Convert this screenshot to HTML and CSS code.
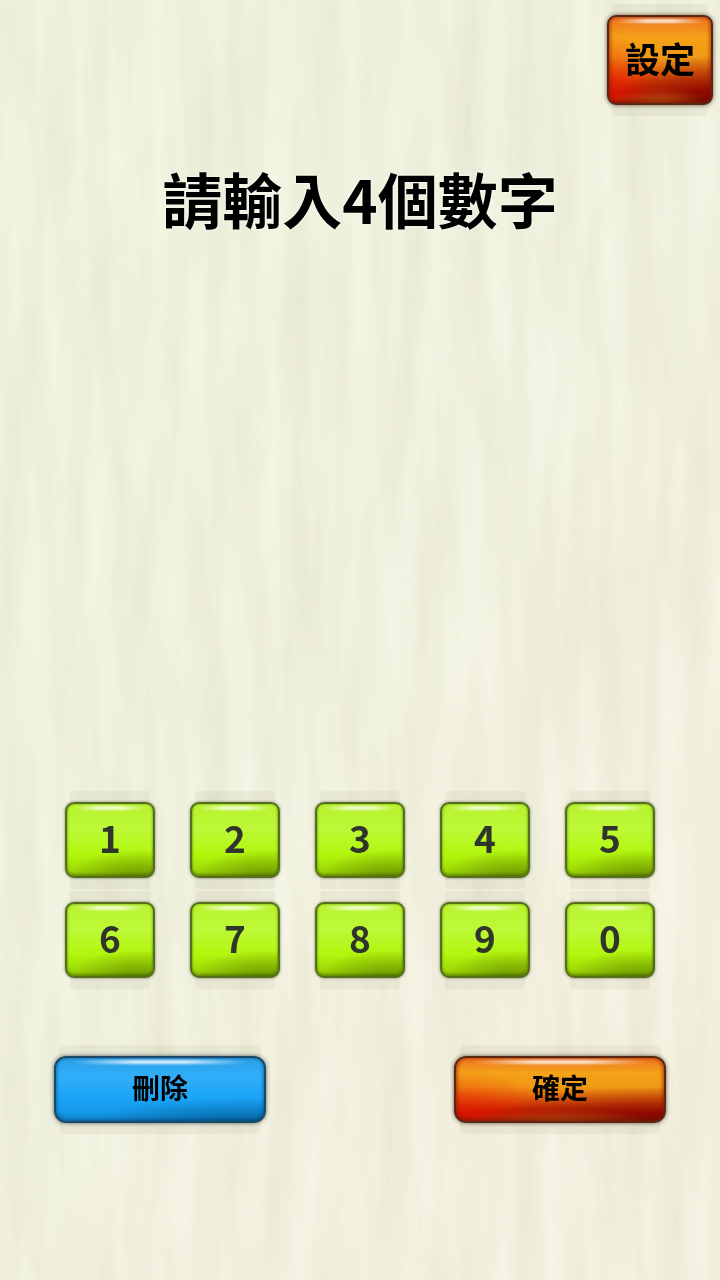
FILE: index.html
```html
<!DOCTYPE html>
<html lang="zh-Hant">
<head>
    <meta charset="UTF-8">
    <meta name="viewport" content="width=device-width, initial-scale=1.0">
    <title>請輸入4個數字</title>
    <link rel="stylesheet" href="styles.css">
</head>
<body>
    <!-- wood grain -->
    <svg class="grain" aria-hidden="true">
        <filter id="wood" x="0" y="0" width="100%" height="100%" color-interpolation-filters="sRGB">
            <feTurbulence type="fractalNoise" baseFrequency="0.035 0.004" numOctaves="4" seed="7"/>
            <feColorMatrix values="0 0 0 0 0.84  0 0 0 0 0.84  0 0 0 0 0.74  0.6 0 0 0 -0.14"/>
        </filter>
        <rect width="100%" height="100%" filter="url(#wood)"/>
    </svg>

    <div class="game">
        <header class="top">
            <button type="button" class="btn orange settings">設定</button>
        </header>

        <h1 class="title">請輸入4個數字</h1>

        <div class="keypad">
            <button type="button" class="btn green">1</button>
            <button type="button" class="btn green">2</button>
            <button type="button" class="btn green">3</button>
            <button type="button" class="btn green">4</button>
            <button type="button" class="btn green">5</button>
            <button type="button" class="btn green">6</button>
            <button type="button" class="btn green">7</button>
            <button type="button" class="btn green">8</button>
            <button type="button" class="btn green">9</button>
            <button type="button" class="btn green">0</button>
        </div>

        <div class="actions">
            <button type="button" class="btn blue">刪除</button>
            <button type="button" class="btn orange">確定</button>
        </div>
    </div>
</body>
</html>
```

FILE: styles.css
```css
* {
    box-sizing: border-box;
}
body {
    margin: 0;
    background: linear-gradient(125deg, #f4f7e2 0%, #f4f5e4 50%, #f8f4e5 80%);
    font-family: "Noto Sans CJK TC", "Noto Sans", sans-serif;
    color: #000;
}
.grain {
    position: fixed;
    inset: 0;
    width: 100%;
    height: 100%;
    z-index: -1;
}
.game {
    display: flex;
    flex-direction: column;
    min-height: 100vh;
    padding-bottom: 157px;
}
.top {
    display: flex;
    justify-content: flex-end;
    padding: 15px 7px 0;
}
.title {
    margin: 48px 0;
    font-size: 60px;
    line-height: 90px;
    font-weight: bold;
    text-align: center;
    text-shadow: 0 0 3px #fff;
}
.keypad {
    display: grid;
    grid-template-columns: repeat(5, 1fr);
    gap: 24px 35px;
    margin-top: auto;
    padding: 0 65px;
}
.actions {
    display: flex;
    justify-content: space-between;
    margin-top: 78px;
    padding: 0 54px;
}

/* glossy buttons */
.btn {
    position: relative;
    padding: 0 0 6px;
    border: 2px solid;
    border-radius: 9px;
    font-family: inherit;
    font-weight: bold;
    color: #000;
    cursor: pointer;
}
.btn::before {
    content: "";
    position: absolute;
    top: 2px;
    left: 8%;
    right: 8%;
    height: 4px;
    background: linear-gradient(90deg, transparent, rgba(255, 255, 255, 0.8) 35%, rgba(255, 255, 255, 0.8) 65%, transparent);
    filter: blur(1px);
}
.green {
    height: 76px;
    border-color: #55701a;
    background:
        radial-gradient(ellipse 85% 42% at 85% 105%, rgba(95, 130, 0, 0.8), rgba(110, 150, 0, 0.5) 50%, transparent),
        linear-gradient(#b7f22b, #bdf938 35%, #b2f60d 70%, #98d005);
    box-shadow:
        0 0 3px rgba(50, 60, 20, 0.6),
        0 16px 1px -5px rgba(110, 110, 80, 0.07),
        0 -16px 1px -5px rgba(110, 110, 80, 0.07),
        inset 0 0 2px rgba(60, 90, 0, 0.6),
        inset 0 -2px 3px rgba(50, 70, 0, 0.4);
    font-size: 37px;
    line-height: 56px;
    color: #2f352b;
}
.orange {
    border-color: #5a2812;
    background:
        radial-gradient(ellipse 45% 20% at 50% 100%, rgba(205, 110, 20, 0.6), transparent),
        radial-gradient(ellipse 90% 60% at 100% 105%, rgba(110, 0, 0, 0.8), rgba(125, 0, 0, 0.35) 60%, transparent),
        radial-gradient(ellipse 50% 70% at 0% 90%, rgba(240, 20, 0, 0.7), transparent),
        linear-gradient(#ec7420, #f5a218 24%, #f09a15 46%, #d9580a 68%, #b31400 88%, #a03010);
    box-shadow:
        0 0 4px rgba(50, 25, 10, 0.7),
        0 16px 1px -5px rgba(110, 110, 80, 0.08),
        0 -16px 1px -5px rgba(110, 110, 80, 0.08),
        inset 0 0 4px rgba(170, 30, 0, 0.7),
        inset 0 -2px 4px rgba(70, 0, 0, 0.5);
}
.blue {
    border-color: #1c4868;
    background:
        radial-gradient(ellipse 75% 42% at 90% 105%, rgba(0, 75, 125, 0.65), rgba(0, 90, 150, 0.4) 50%, transparent),
        linear-gradient(#2b9fe6, #30aefa 30%, #1aa4f7 65%, #1290dc);
    box-shadow:
        0 0 4px rgba(20, 40, 50, 0.7),
        0 16px 1px -5px rgba(110, 110, 80, 0.08),
        0 -16px 1px -5px rgba(110, 110, 80, 0.08),
        inset 0 0 3px rgba(0, 70, 120, 0.6),
        inset 0 -2px 4px rgba(0, 50, 90, 0.4);
}
.settings {
    width: 106px;
    height: 90px;
    font-size: 35px;
}
.actions .btn {
    width: 212px;
    height: 67px;
    border-radius: 12px;
    font-size: 28px;
}
```
